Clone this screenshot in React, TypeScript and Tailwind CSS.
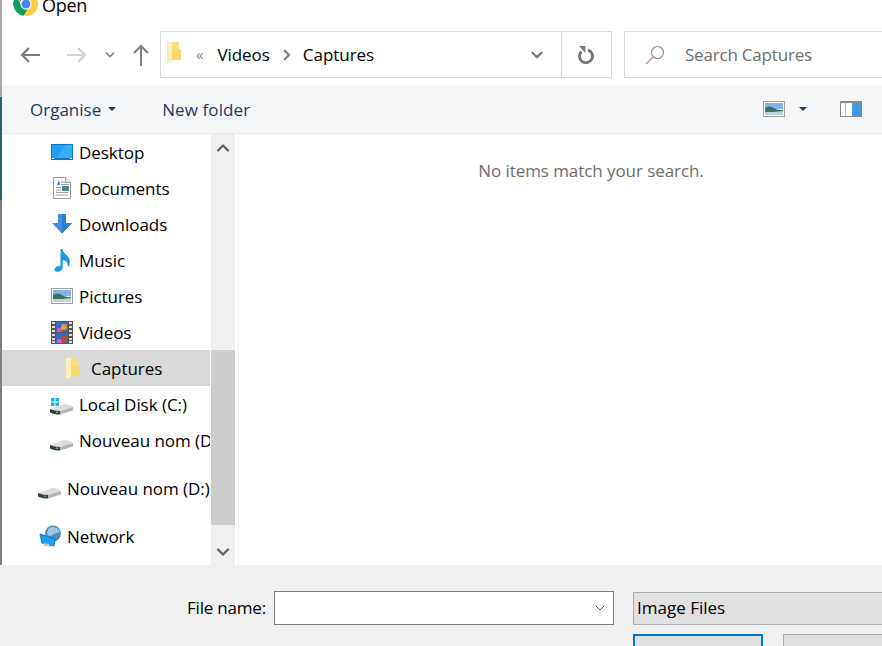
import { ChevronDown, ChevronUp } from "lucide-react";
import type { ReactNode } from "react";

const FONT = "font-['Open_Sans','Noto_Sans',sans-serif]";

// Windows shell icons, drawn by hand
const ChromeIcon = () => (
  <svg width="26" height="26" viewBox="0 0 26 26" className="shrink-0">
    <path d="M13 1a12 12 0 0 1 10.4 6H13a6 6 0 0 0-5.6 3.6L3.2 5.2A12 12 0 0 1 13 1z" fill="#db4437" />
    <path d="M3.2 5.2l5 8.6a5.5 5.5 0 0 0 6.6 4.6L10.8 24.8A12 12 0 0 1 3.2 5.2z" fill="#0f9d58" />
    <path d="M23.4 7A12 12 0 0 1 11 24.8l5-8.7A6 6 0 0 0 16.2 8z" fill="#ffcd40" />
    <circle cx="13" cy="13" r="5.6" fill="#fff" />
    <circle cx="13" cy="13" r="4.5" fill="#4285f4" />
  </svg>
);

const FolderIcon = () => (
  <svg width="14" height="21" viewBox="0 0 14 21" className="shrink-0">
    <path d="M0 0h12v7h2v11H5v1l-5 2z" fill="#f9dc82" />
    <path d="M0 0h5v19l-5 2z" fill="#fdeebc" />
    <path d="M5 8h9v10H5z" fill="#f8d670" />
  </svg>
);

const DesktopIcon = () => (
  <svg width="22" height="16" viewBox="0 0 22 16">
    <rect width="22" height="16" fill="#0c76c8" />
    <rect x="1" y="1" width="20" height="13" fill="#1ea1f5" />
    <path d="M5 14L15 1h6v13z" fill="#38aef8" />
    <rect x="1" y="14" width="2" height="1" fill="#fff" />
    <rect x="19" y="14" width="2" height="1" fill="#fff" />
  </svg>
);

const DocumentsIcon = () => (
  <svg width="18" height="22" viewBox="0 0 18 22">
    <path d="M.5.5h12l5 5v16H.5z" fill="#fff" stroke="#9a9a9a" />
    <path d="M12.5.5v5h5" fill="#eee" stroke="#9a9a9a" />
    <path d="M4 8l2-5 1 5z" fill="#2b88d8" />
    <path d="M8 5h4M8 7.5h8M3 10.5h5M3 13h5M3 15.5h12M3 18h12" stroke="#9aa0a6" />
    <rect x="9" y="9" width="7" height="5" fill="#4c7f98" />
  </svg>
);

const DownloadsIcon = () => (
  <svg width="20" height="20" viewBox="0 0 20 20">
    <path d="M6 0h8v9h6l-10 10.5L0 9h6z" fill="#3d8fe0" />
    <path d="M10 0h4v9h6L10 19.5z" fill="#2e7dd0" />
  </svg>
);

const MusicIcon = () => (
  <svg width="17" height="23" viewBox="0 0 17 23">
    <path d="M6.5 0h2c.5 3.500 2.800 4.500 5 7 2.800 3 2.800 6.500 1.500 10.500l-1.500-.5c.7-3-1-5-4.700-6V18c0 3-3 5-6 4.800C.5 22.500 0 20.500 1 19c1.300-2 3.500-2.500 5.500-1.800z" fill="#1e9be8" />
  </svg>
);

const PicturesIcon = () => (
  <svg width="22" height="16" viewBox="0 0 22 16">
    <rect x=".5" y=".5" width="21" height="15" fill="#fff" stroke="#a0a0a0" />
    <rect x="2" y="2" width="18" height="6" fill="#7fb4ec" />
    <path d="M2 7c3-2 6-2 9 0s6 2 9 2v3H2z" fill="#3f6f62" />
    <path d="M2 11c6 0 12 0 18-1v4H2z" fill="#b8d4e2" />
  </svg>
);

const VideosIcon = () => (
  <svg width="22" height="23" viewBox="0 0 22 23">
    <rect width="22" height="23" fill="#555" />
    <rect x="5" y="1" width="12" height="10" fill="#3a66c8" />
    <rect x="5" y="12" width="12" height="10" fill="#3a66c8" />
    <rect x="6" y="7" width="5" height="4" fill="#d85aa8" />
    <circle cx="13" cy="6" r="3" fill="#e8a020" />
    <rect x="6" y="18" width="5" height="4" fill="#d85aa8" />
    <circle cx="13" cy="18" r="3" fill="#d84020" />
    {[1, 5, 9, 13, 17, 20].map((y) => (
      <g key={y}>
        <rect x="1" y={y} width="3" height="2" fill="#ddd" />
        <rect x="18" y={y} width="3" height="2" fill="#ddd" />
      </g>
    ))}
  </svg>
);

const DiskIcon = ({ windows }: { windows?: boolean }) => (
  <svg width="23" height="22" viewBox="0 0 23 22">
    {windows && (
      <g fill="#12b4ee">
        <rect x="1" y="5" width="3.500" height="3.500" />
        <rect x="5.500" y="5" width="3.500" height="3.500" />
        <rect x="1" y="9.500" width="3.500" height="3.500" />
        <rect x="5.500" y="9.500" width="3.500" height="3.500" />
      </g>
    )}
    <path d="M0 16l14-5c4 0 7 1 9 3L10 18c-4 0-7-1-10-2z" fill="#dcdcdc" />
    <path d="M0 16c3 1 6 2 10 2v3.500c-4 0-7-.5-10-2z" fill="#3a3a3a" />
    <path d="M10 18l13-4v3.500L10 21.500z" fill="#b4b4b4" />
    <rect x="6" y="18.500" width="2" height="1.500" fill="#3cc060" />
  </svg>
);

const NetworkIcon = () => (
  <svg width="23" height="23" viewBox="0 0 23 23">
    <circle cx="15" cy="8.500" r="8" fill="#4c8cb8" />
    <path d="M11 3c3-2 8-1 10 2s-3 3-5 4-4 3-6 1 0-5 1-7z" fill="#9cc8e0" />
    <path d="M2 9l15 5-1 7-12-3z" fill="#1ea1f5" stroke="#0c76c8" />
    <path d="M6 18l5 1v2l3 1-8-1z" fill="#c8ccd0" />
  </svg>
);

const BackArrow = () => (
  <svg width="20" height="16" viewBox="0 0 20 16" fill="none" stroke="#7a7a7a" strokeWidth="2.200">
    <path d="M20 8H2M9 1L2 8l7 7" />
  </svg>
);

const ForwardArrow = () => (
  <svg width="20" height="16" viewBox="0 0 20 16" fill="none" stroke="#d4d4d4" strokeWidth="2.200">
    <path d="M0 8h18M11 1l7 7-7 7" />
  </svg>
);

const UpArrow = () => (
  <svg width="16" height="22" viewBox="0 0 16 22" fill="none" stroke="#808080" strokeWidth="2">
    <path d="M8 22V2M1 9l7-7 7 7" />
  </svg>
);

const RefreshIcon = () => (
  <svg width="18" height="18" viewBox="0 0 18 18" fill="none">
    <path d="M4.500 4.500a6.500 6.500 0 1 0 6.500-1.500" stroke="#7a7a7a" strokeWidth="3" transform="translate(-1 1)" />
    <path d="M1 0h6.500v7z" fill="#7a7a7a" />
  </svg>
);

const SearchIcon = () => (
  <svg width="20" height="20" viewBox="0 0 20 20" fill="none">
    <circle cx="12.500" cy="7.500" r="6" stroke="#8a8a8a" strokeWidth="1.100" />
    <path d="M8 12l-7 7" stroke="#c08a70" strokeWidth="1.300" />
  </svg>
);

const PaneIcon = () => (
  <svg width="22" height="16" viewBox="0 0 22 16">
    <rect x=".5" y=".5" width="21" height="15" fill="#fff" stroke="#8a8a8a" />
    <rect x="5" y="1" width="1" height="14" fill="#b0b0b0" />
    <rect x="12" y="2" width="9" height="13" fill="#3f9ae0" />
    <rect x="1" y="0" width="20" height="2" fill="#8a8a8a" />
  </svg>
);

const Caret = () => <span className="h-0 w-0 border-x-[4px] border-t-[4px] border-x-transparent border-t-[#1e3a5f]" />;

const NavRow = ({ icon, label, pad, gap, selected, iconW }: { icon: ReactNode; label: string; pad: string; gap: string; selected?: boolean; iconW: string }) => (
  <div className={`flex h-9 items-center overflow-hidden whitespace-nowrap ${pad} ${selected ? "bg-[#d9d9d9]" : ""}`}>
    <div className={`flex shrink-0 items-center justify-center ${iconW} ${gap}`}>{icon}</div>
    <span className="mt-[1px] text-[17px] tracking-[-0.05px] text-black">{label}</span>
  </div>
);

export default function App() {
  return (
    <div className={`flex h-[646px] w-[882px] flex-col overflow-hidden bg-white ${FONT}`}>
      <div className="flex h-[565px] shrink-0">
        {/* edge of the window behind */}
        <div className="flex w-[2px] shrink-0 flex-col">
          <div className="h-[97px] bg-[#a8a8a8]" />
          <div className="h-[103px] bg-[#2c5f70]" />
          <div className="flex-1 bg-[#7f7f7f]" />
        </div>

        <div className="flex min-w-0 flex-1 flex-col">
          {/* title bar, cut off by the top of the picture */}
          <div className="flex h-[17px] items-end gap-[3px] overflow-hidden pl-[11px]">
            <ChromeIcon />
            <span className="text-[18px] leading-[24px] tracking-[-0.3px] text-black">Open</span>
          </div>

          {/* navigation */}
          <div className="mt-[14px] flex h-[47px] w-[900px] items-center">
            <div className="ml-[18px] flex w-[140px] shrink-0 items-center">
              <BackArrow />
              <div className="ml-[27px]">
                <ForwardArrow />
              </div>
              <ChevronDown size={14} strokeWidth={3} className="ml-[16px] text-[#808080]" />
              <div className="ml-[16px]">
                <UpArrow />
              </div>
            </div>
            <div className="flex h-[47px] w-[452px] shrink-0 items-center border border-[#d9d9d9]">
              <div className="ml-[6px] mb-[4px]">
                <FolderIcon />
              </div>
              <span className="ml-[15px] text-[15px] leading-none text-[#808080]">«</span>
              <span className="ml-[14px] mt-[1px] text-[17px] tracking-[-0.05px] text-black">Videos</span>
              <svg width="9" height="12" viewBox="0 0 9 12" className="ml-[12px]" fill="none" stroke="#808080" strokeWidth="2.200">
                <path d="M2 1l5 5-5 5" />
              </svg>
              <span className="ml-[12px] mt-[1px] text-[17px] tracking-[-0.05px] text-black">Captures</span>
              <div className="flex-1" />
              <ChevronDown size={18} strokeWidth={3} className="mr-[15px] text-[#7a7a7a]" />
              <div className="flex h-full w-[50px] items-center justify-center border-l border-[#d9d9d9]">
                <RefreshIcon />
              </div>
            </div>
            <div className="ml-[12px] flex h-[47px] flex-1 items-center border border-[#d9d9d9]">
              <div className="ml-[20px]">
                <SearchIcon />
              </div>
              <span className="ml-[20px] mt-[1px] text-[17px] tracking-[-0.2px] text-[#6d6d6d]">Search Captures</span>
            </div>
          </div>

          {/* toolbar */}
          <div className="mt-[7px] flex h-[49px] shrink-0 items-center border-b border-[#e8e8e8] bg-[#f4f6f8] text-[17px] text-[#1e3a5f]">
            <span className="ml-[28px] mt-[1px]">Organise</span>
            <div className="ml-[7px] flex">
              <Caret />
            </div>
            <span className="ml-[46px] mt-[1px] tracking-[0.1px]">New folder</span>
            <div className="flex-1" />
            <PicturesIcon />
            <div className="ml-[14px] flex">
              <Caret />
            </div>
            <div className="ml-[33px] mr-[20px]">
              <PaneIcon />
            </div>
          </div>

          {/* tree and file list */}
          <div className="flex min-h-0 flex-1">
            <div className="flex w-[208px] shrink-0 flex-col">
              <NavRow pad="pl-[49px]" iconW="w-[22px]" gap="mr-[6px]" icon={<DesktopIcon />} label="Desktop" />
              <NavRow pad="pl-[49px]" iconW="w-[22px]" gap="mr-[6px]" icon={<DocumentsIcon />} label="Documents" />
              <NavRow pad="pl-[49px]" iconW="w-[22px]" gap="mr-[6px]" icon={<DownloadsIcon />} label="Downloads" />
              <NavRow pad="pl-[49px]" iconW="w-[22px]" gap="mr-[6px]" icon={<MusicIcon />} label="Music" />
              <NavRow pad="pl-[49px]" iconW="w-[22px]" gap="mr-[6px]" icon={<PicturesIcon />} label="Pictures" />
              <NavRow pad="pl-[49px]" iconW="w-[22px]" gap="mr-[6px]" icon={<VideosIcon />} label="Videos" />
              <NavRow pad="pl-[64px]" iconW="w-[14px]" gap="mr-[11px]" icon={<FolderIcon />} label="Captures" selected />
              <NavRow pad="pl-[48px]" iconW="w-[23px]" gap="mr-[6px]" icon={<DiskIcon windows />} label="Local Disk (C:)" />
              <NavRow pad="pl-[48px]" iconW="w-[23px]" gap="mr-[6px]" icon={<DiskIcon />} label="Nouveau nom (D:)" />
              <div className="mt-[12px]">
                <NavRow pad="pl-[36px]" iconW="w-[23px]" gap="mr-[6px]" icon={<DiskIcon />} label="Nouveau nom (D:)" />
              </div>
              <div className="mt-[12px]">
                <NavRow pad="pl-[36px]" iconW="w-[23px]" gap="mr-[6px]" icon={<NetworkIcon />} label="Network" />
              </div>
            </div>

            {/* scrollbar */}
            <div className="ml-[1px] flex w-[24px] shrink-0 flex-col bg-[#f0f0f0]">
              <div className="flex h-[28px] items-center justify-center">
                <ChevronUp size={20} strokeWidth={2.800} className="text-[#606060]" />
              </div>
              <div className="mt-[188px] h-[175px] bg-[#cdcdcd]" />
              <div className="flex-1" />
              <div className="flex h-[26px] items-center justify-center">
                <ChevronDown size={20} strokeWidth={2.800} className="text-[#606060]" />
              </div>
            </div>
            <div className="ml-[3px] w-px shrink-0 bg-[#f0f0f0]" />

            <div className="flex flex-1 justify-center pt-[25px]">
              <span className="ml-[61px] text-[17px] leading-[24px] tracking-[-0.07px] text-[#6d6d6d]">No items match your search.</span>
            </div>
          </div>
        </div>
      </div>

      {/* footer */}
      <div className="flex flex-1 flex-col bg-[#f0f0f0] pl-[187px] pt-[26px]">
        <div className="flex h-[34px] items-center">
          <span className="w-[87px] shrink-0 text-[17px] tracking-[-0.2px] text-black">File name:</span>
          <div className="flex h-[34px] w-[340px] shrink-0 items-center justify-end border border-[#7a7a7a] bg-white pr-[5px]">
            <ChevronDown size={16} strokeWidth={1.300} className="text-[#303030]" />
          </div>
          <div className="ml-[19px] flex h-[33px] w-[300px] shrink-0 items-center border border-[#adadad] bg-[#e1e1e1] pl-[3px] text-[17px] text-black">
            Image Files
          </div>
        </div>
        <div className="ml-[446px] mt-[9px] flex gap-[20px]">
          <div className="h-[30px] w-[130px] shrink-0 border-2 border-[#0078d7] bg-[#e1e1e1]" />
          <div className="h-[30px] w-[130px] shrink-0 border border-[#adadad] bg-[#e1e1e1]" />
        </div>
      </div>
    </div>
  );
}
